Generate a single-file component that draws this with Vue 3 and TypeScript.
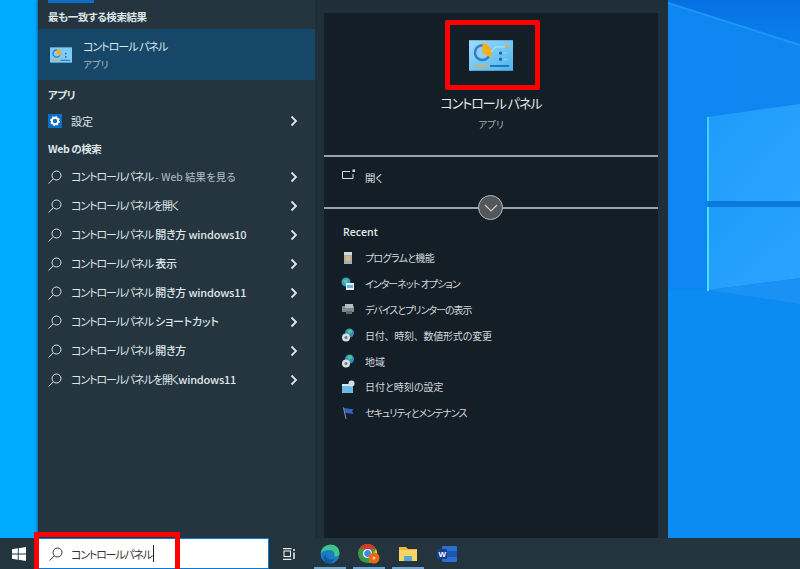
<script setup lang="ts">
const webRows: { main: string; extra?: string; dim?: boolean }[] = [
  { main: 'コントロールパネル', extra: ' - Web 結果を見る', dim: true },
  { main: 'コントロールパネルを開く' },
  { main: 'コントロールパネル', extra: ' 開き方 windows10' },
  { main: 'コントロールパネル', extra: ' 表示' },
  { main: 'コントロールパネル', extra: ' 開き方 windows11' },
  { main: 'コントロールパネル', extra: ' ショートカット' },
  { main: 'コントロールパネル', extra: ' 開き方' },
  { main: 'コントロールパネルを開く', extra: 'windows11' },
]
const recent: { label: string; kind: string; fit: string }[] = [
  { label: 'プログラムと機能', kind: 'box', fit: 'mid' },
  { label: 'インターネット オプション', kind: 'net', fit: 'kana' },
  { label: 'デバイスとプリンターの表示', kind: 'printer', fit: 'kana' },
  { label: '日付、時刻、数値形式の変更', kind: 'globe', fit: 'kanji' },
  { label: '地域', kind: 'globe', fit: 'none' },
  { label: '日付と時刻の設定', kind: 'clock', fit: 'none' },
  { label: 'セキュリティとメンテナンス', kind: 'flag', fit: 'kana' },
]
</script>

<template>
  <div class="screen">
    <svg class="wallpaper" viewBox="0 0 800 569" width="800" height="569">
      <defs>
        <linearGradient id="sky" x1="0" y1="0" x2="1" y2="0">
          <stop offset="0" stop-color="#0a8af5" />
          <stop offset="1" stop-color="#0f86f0" />
        </linearGradient>
        <linearGradient id="topsky" x1="0" y1="0" x2="0" y2="1">
          <stop offset="0" stop-color="#0670e2" />
          <stop offset="1" stop-color="#0a80ee" />
        </linearGradient>
        <linearGradient id="pane" x1="0" y1="0" x2="1" y2="1">
          <stop offset="0" stop-color="#1e9bfb" />
          <stop offset="1" stop-color="#2aa4fd" />
        </linearGradient>
        <linearGradient id="cpFill" x1="0" y1="0" x2="1" y2="1">
          <stop offset="0" stop-color="#9bdcfa" />
          <stop offset="1" stop-color="#4eb4ee" />
        </linearGradient>
      </defs>
      <rect width="800" height="569" fill="url(#sky)" />
      <rect x="0" y="0" width="38" height="569" fill="#00aaff" />
      <polygon points="668,2 800,45 800,0 668,0" fill="url(#topsky)" />
      <polygon points="668,2 800,44 800,46 668,4" fill="#1f95f8" />
      <polygon points="668,290 708,290 800,305 800,569 668,569" fill="#0b8cf3" />
      <polygon points="708,117 800,104 800,201 708,201" fill="url(#pane)" />
      <polygon points="708,207 800,207 800,278 708,290" fill="url(#pane)" />
      <polygon points="708,290 800,278 800,304" fill="#1a92f5" />
      <rect x="707" y="117" width="2" height="84" fill="#44d0fb" />
      <rect x="707" y="207" width="2" height="84" fill="#4ae0fb" />
      <rect x="708" y="201" width="92" height="6" fill="#0b78dc" />
    </svg>

    <div class="main">
      <div class="side"></div>
      <section class="results">
        <div class="accent"></div>
        <h3 class="head first">最も一致する検索結果</h3>
        <div class="best">
          <svg class="cp small" viewBox="0 0 46 32" width="22" height="16">
            <rect width="46" height="32" fill="#7ccdf6" />
            <circle cx="14" cy="13" r="9" fill="#2f7fc0" />
            <circle cx="14" cy="13" r="6" fill="#8fd0f2" />
            <path d="M14 13V3a10 10 0 0 1 8 15z" fill="#f4ae23" />
            <rect x="5" y="26" width="14" height="2" fill="#eea842" />
            <rect x="22" y="26" width="20" height="2" fill="#1b6ba8" />
            <circle cx="33" cy="13" r="1.800" fill="#1b6ba8" />
            <circle cx="33" cy="20" r="1.800" fill="#1b6ba8" />
          </svg>
          <div class="bestText">
            <div class="bestTitle">コントロール パネル</div>
            <div class="bestSub">アプリ</div>
          </div>
        </div>
        <h3 class="head apps">アプリ</h3>
        <div class="row settings">
          <svg class="rowIcon" viewBox="0 0 14 14" width="14" height="14">
            <rect width="14" height="14" fill="#0b6fc4" />
            <circle cx="7" cy="7" r="3.200" fill="none" stroke="#fff" stroke-width="2" />
            <circle cx="7" cy="7" r="4.400" fill="none" stroke="#fff" stroke-width="1.200" stroke-dasharray="1.600 1.850" />
          </svg>
          <span class="rowText">設定</span>
          <svg class="chev" viewBox="0 0 8 12" width="8" height="12"><path d="M1.500 1.500 6 6l-4.500 4.500" fill="none" stroke="#dfe6ea" stroke-width="1.800" /></svg>
        </div>
        <h3 class="head web">Web の検索</h3>
        <div v-for="(r, i) in webRows" :key="i" class="row">
          <svg class="rowIcon" viewBox="0 0 14 14" width="14" height="14">
            <circle cx="8.500" cy="5.500" r="4.500" fill="none" stroke="#dbe2e6" stroke-width="1" />
            <path d="M5.300 8.800.6 13.500" stroke="#dbe2e6" stroke-width="1" fill="none" />
          </svg>
          <span class="rowText"><span class="tight">{{ r.main }}</span><span :class="r.dim ? 'dim' : 'bold'">{{ r.extra }}</span></span>
          <svg class="chev" viewBox="0 0 8 12" width="8" height="12"><path d="M1.500 1.500 6 6l-4.500 4.500" fill="none" stroke="#dfe6ea" stroke-width="1.800" /></svg>
        </div>
      </section>

      <section class="detailWrap">
        <div class="detail">
          <div class="hero">
            <svg class="cp" viewBox="0 0 46 32" width="44" height="31">
              <rect width="46" height="32" fill="url(#cpFill)" />
              <circle cx="14" cy="13" r="9" fill="#2f7fc0" />
              <circle cx="14" cy="13" r="6.500" fill="#8fd0f2" />
              <path d="M14 13V3a10 10 0 0 1 8.500 15z" fill="#f4ae23" />
              <path d="M23 12c3 0 2-5 6-5h9" fill="none" stroke="#d4effc" stroke-width=".8" />
              <rect x="38" y="5" width="3" height="3" fill="#eea842" />
              <path d="M30 13.500h10M30 20h10" stroke="#a8dff8" stroke-width=".8" />
              <circle cx="33" cy="13.500" r="1.800" fill="#1b6ba8" />
              <circle cx="33" cy="20" r="1.800" fill="#1b6ba8" />
              <rect x="6" y="26" width="14" height="1.800" fill="#eea842" />
              <rect x="22" y="26" width="20" height="1.800" fill="#1b6ba8" />
            </svg>
            <div class="heroTitle">コントロール パネル</div>
            <div class="heroSub">アプリ</div>
          </div>
          <div class="rule"></div>
          <div class="open">
            <svg viewBox="0 0 14 12" width="14" height="12">
              <path d="M8 2.500H.5V9.500H11V5" fill="none" stroke="#d5dce0" stroke-width="1" />
              <rect x="10.500" y=".5" width="2.500" height="2.500" fill="#d5dce0" />
            </svg>
            <span>開く</span>
          </div>
          <div class="divider">
            <div class="rule"></div>
            <div class="circle">
              <svg viewBox="0 0 14 8" width="14" height="8"><path d="M1 1l6 6 6-6" fill="none" stroke="#c9ced1" stroke-width="1.200" /></svg>
            </div>
          </div>
          <h4 class="recentHead">Recent</h4>
          <ul class="recent">
            <li v-for="item in recent" :key="item.label">
              <svg viewBox="0 0 14 14" width="14" height="14">
                <template v-if="item.kind === 'box'">
                  <rect x="3" y="1" width="8" height="12" fill="#a8aeab" />
                  <rect x="5" y="5" width="4" height="5" fill="#d9b884" />
                  <rect x="3" y="1" width="8" height="3" fill="#d7dbd8" />
                </template>
                <template v-else-if="item.kind === 'net'">
                  <circle cx="5" cy="5" r="4.500" fill="#2f9fd8" />
                  <path d="M2 3.500 6 2l1 3-3 2z" fill="#6fc07a" />
                  <rect x="5" y="6" width="8" height="7" fill="#e5eef3" />
                  <rect x="6" y="8" width="6" height="3" fill="#6db4dc" />
                </template>
                <template v-else-if="item.kind === 'printer'">
                  <rect x="1" y="4" width="12" height="6" fill="#7e8a90" />
                  <rect x="4" y="2" width="8" height="4" fill="#b6bdc1" />
                  <rect x="5" y="9" width="6" height="3" fill="#5e6a70" />
                </template>
                <template v-else-if="item.kind === 'globe'">
                  <circle cx="8.500" cy="5" r="4.500" fill="#2a8fd6" />
                  <path d="M6 2.500 10 1l1.500 3L8 6z" fill="#5cc46d" />
                  <circle cx="5" cy="9.500" r="4" fill="#d8dde0" />
                  <circle cx="5" cy="9.500" r="1.500" fill="#6f7a80" />
                </template>
                <template v-else-if="item.kind === 'clock'">
                  <rect x="1" y="4" width="11" height="9" fill="#6cbbe6" />
                  <rect x="1" y="4" width="11" height="2" fill="#d5e8f2" />
                  <circle cx="10.500" cy="3.500" r="3" fill="#d8dde0" />
                </template>
                <template v-else>
                  <path d="M3 2 13 3.500 11 5 12.500 8 4.500 7z" fill="#3560c8" />
                  <path d="M2.500 1.500 5 13" stroke="#8a97ad" stroke-width="1" />
                </template>
              </svg>
              <span :class="item.fit">{{ item.label }}</span>
            </li>
          </ul>
        </div>
      </section>
      <div class="gutter"></div>
    </div>

    <footer class="taskbar">
      <div class="startBtn">
        <svg viewBox="0 0 14 14" width="14" height="14">
          <path d="M0 2.200 5.800 1.300V6.600H0zM6.700 1.200 14 0V6.600H6.700zM0 7.400H5.800V12.700L0 11.800zM6.700 7.400H14V14L6.700 12.800z" fill="#fff" />
        </svg>
      </div>
      <div class="search">
        <svg class="searchIcon" viewBox="0 0 14 14" width="14" height="14">
          <circle cx="8.500" cy="5.500" r="4.500" fill="none" stroke="#333" stroke-width="1" />
          <path d="M5.300 8.800.6 13.500" stroke="#333" stroke-width="1" fill="none" />
        </svg>
        <span class="query">コントロールパネル</span><span class="caret"></span>
      </div>
      <div class="tray">
        <div class="tb">
          <svg viewBox="0 0 14 12" width="14" height="12">
            <rect x="2" y="3" width="6.500" height="5.500" fill="none" stroke="#e6eaec" stroke-width="1.100" />
            <path d="M1 .6H9.500M1 11.400H9.500" stroke="#e6eaec" stroke-width="1.100" />
            <path d="M12 1V3M12 4.500V11" stroke="#e6eaec" stroke-width="1.600" />
          </svg>
        </div>
        <div class="tb app">
          <svg viewBox="0 0 20 20" width="20" height="20">
            <circle cx="10" cy="10" r="9.500" fill="#1b7cc4" />
            <path d="M.6 9C2 2.500 8 .5 12 .8c4 .4 7.500 3.700 7.500 8.700 0 2.500-3 3.300-5.500 2.800 1.500-3.500-1-6.300-4-6.300-4 0-7.500 1-9.400 3z" fill="#3fc48a" />
            <path d="M5.500 10c0 4.500 4.500 6.500 9 5-1.500 2.500-3.500 4-6 4C4 19 2 14 5.500 10z" fill="#0f5aa8" />
          </svg>
        </div>
        <div class="tb app">
          <svg viewBox="0 0 22 20" width="22" height="20">
            <circle cx="9.500" cy="9.500" r="9.500" fill="#3a9a4b" />
            <path d="M1.300 5A9.500 9.500 0 0 1 18 5H9.500z" fill="#d8392b" />
            <path d="M18 5a9.500 9.500 0 0 1-7 14l4-9z" fill="#f5c518" />
            <circle cx="9.500" cy="9.500" r="4" fill="#3f86e8" stroke="#fff" stroke-width="1.200" />
            <circle cx="16" cy="14" r="5.500" fill="#e56a12" />
            <circle cx="16" cy="14" r="1.500" fill="#f7c9a0" />
          </svg>
        </div>
        <div class="tb app">
          <svg viewBox="0 0 18 16" width="18" height="16">
            <path d="M0 1H7L9 3H18V15H0z" fill="#eab93b" />
            <rect y="4" width="18" height="11" fill="#f6d465" />
            <rect x="5" y="10" width="8" height="5" fill="#5fa5d6" />
          </svg>
        </div>
        <div class="tb app">
          <svg viewBox="0 0 20 16" width="20" height="16">
            <rect x="5" y="0" width="15" height="16" rx="1" fill="#2b6fcf" />
            <rect x="5" y="5" width="15" height="6" fill="#1e55ad" />
            <rect x="0" y="3" width="10" height="10" rx="1" fill="#14408f" />
            <text x="1.600" y="11" class="wordW">W</text>
          </svg>
        </div>
      </div>
    </footer>

    <div class="mark markIcon"></div>
    <div class="mark markSearch"></div>
  </div>
</template>

<style scoped>
.screen {
  position: relative;
  width: 800px;
  height: 569px;
  overflow: hidden;
  display: flex;
  flex-direction: column;
  font-family: "Noto Sans CJK JP", "Noto Sans", sans-serif;
  font-feature-settings: "palt";
  color: #e4e9ec;
}
.wallpaper {
  position: absolute;
  left: 0;
  top: 0;
}
.main {
  position: relative;
  flex: 1;
  display: flex;
  min-height: 0;
}
.side {
  width: 38px;
  flex: none;
}
.gutter {
  flex: 1;
}
.results {
  width: 277px;
  flex: none;
  background: #24353f;
  position: relative;
  box-shadow: -1px 0 2px rgba(0, 40, 90, .5);
}
.accent {
  width: 46px;
  height: 3px;
  margin-left: 10px;
  background: #0a6fc6;
}
.head {
  margin: 0;
  padding-left: 10px;
  font-size: 10.500px;
  font-weight: 700;
  line-height: 14px;
  letter-spacing: -.4px;
  color: #dfe5e8;
}
.first {
  margin-top: 7px;
  height: 19px;
}
.best {
  height: 51px;
  background: #164769;
  display: flex;
  align-items: center;
  padding-left: 12px;
  gap: 11px;
}
.small {
  flex: none;
}
.bestText {
  display: flex;
  flex-direction: column;
  gap: 4px;
}
.bestTitle {
  font-size: 11px;
  line-height: 15px;
  letter-spacing: -1px;
  color: #dfe6ea;
}
.bestSub {
  font-size: 9.500px;
  line-height: 13px;
  color: #a9bac6;
}
.apps {
  margin-top: 8px;
  height: 14px;
}
.row {
  height: 29px;
  display: flex;
  align-items: center;
  padding-left: 10px;
  position: relative;
}
.settings {
  height: 32px;
  margin-top: 3px;
}
.web {
  margin-top: 5px;
  margin-bottom: 6px;
  height: 14px;
}
.rowIcon {
  flex: none;
}
.rowText {
  margin-left: 9px;
  font-size: 11px;
  line-height: 15px;
  color: #dfe5e8;
  white-space: pre;
}
.tight {
  letter-spacing: -1.100px;
}
.dim {
  color: #b4c0c7;
  font-size: 10.500px;
}
.bold {
  font-weight: 500;
  letter-spacing: -.2px;
}
.chev {
  position: absolute;
  left: 252px;
  top: 50%;
  margin-top: -6px;
}
.detailWrap {
  width: 353px;
  flex: none;
  background: #1f2f39;
  padding: 13px 10px 0 9px;
  box-sizing: border-box;
}
.detail {
  height: 100%;
  background: #141e26;
  display: flex;
  flex-direction: column;
}
.hero {
  height: 142px;
  display: flex;
  flex-direction: column;
  align-items: center;
  flex: none;
}
.cp {
  margin-top: 27px;
  margin-bottom: 0;
}
.small.cp {
  margin: 0;
}
.heroTitle {
  margin-top: 22px;
  font-size: 13px;
  line-height: 20px;
  letter-spacing: -1px;
  color: #e3e8eb;
}
.heroSub {
  margin-top: 4px;
  font-size: 9.500px;
  line-height: 14px;
  color: #a7b0b6;
}
.rule {
  height: 2px;
  background: #9aa3a8;
  flex: none;
}
.open {
  height: 40px;
  margin-bottom: 10px;
  display: flex;
  align-items: center;
  padding-left: 18px;
  gap: 9px;
  flex: none;
  font-size: 10.500px;
  color: #d5dce0;
}
.open svg {
  margin-top: -4px;
}
.divider {
  position: relative;
  flex: none;
}
.circle {
  position: absolute;
  left: 154px;
  top: -12px;
  width: 25px;
  height: 25px;
  box-sizing: border-box;
  border: 1px solid #b5babd;
  border-radius: 50%;
  background: #545759;
  display: flex;
  align-items: center;
  justify-content: center;
}
.recentHead {
  margin: 16px 0 0 19px;
  font-family: "Open Sans", "Noto Sans", sans-serif;
  font-size: 10.500px;
  font-weight: 600;
  line-height: 14px;
  color: #e3e8eb;
}
.recent {
  list-style: none;
  margin: 6px 0 0 17px;
  padding: 0;
}
.recent li {
  height: 25.800px;
  display: flex;
  align-items: center;
  gap: 10px;
  font-size: 10px;
  color: #d3d9dd;
}
.mid {
  letter-spacing: -.7px;
}
.kana {
  letter-spacing: -1px;
}
.kanji {
  font-feature-settings: normal;
  letter-spacing: -.25px;
}
.taskbar {
  position: relative;
  height: 31px;
  flex: none;
  display: flex;
  background: #23343e;
}
.startBtn {
  width: 38px;
  flex: none;
  display: flex;
  align-items: center;
  justify-content: center;
}
.search {
  width: 231px;
  flex: none;
  box-sizing: border-box;
  background: #fff;
  border: 1px solid #0a78d4;
  display: flex;
  align-items: center;
  padding-left: 10px;
  color: #222;
}
.searchIcon {
  flex: none;
}
.query {
  margin-left: 8px;
  font-size: 11px;
  letter-spacing: -1.200px;
  color: #333;
}
.caret {
  width: 1px;
  height: 17px;
  background: #222;
  margin-left: 1px;
}
.tray {
  display: flex;
  padding-left: 5px;
}
.tb {
  width: 30px;
  display: flex;
  align-items: center;
  justify-content: center;
}
.tb + .tb {
  margin-left: 6px;
}
.tb + .tb + .tb {
  margin-left: 0;
}
.app {
  width: 39px;
  box-sizing: border-box;
  position: relative;
}
.app::after {
  content: "";
  position: absolute;
  left: 3.500px;
  right: 3.500px;
  bottom: 0;
  height: 2px;
  background: #6ea8cf;
}
.tb.app:last-child::after {
  display: none;
}
.wordW {
  font-family: "Liberation Sans", sans-serif;
  font-size: 8px;
  font-weight: 700;
  fill: #fff;
}
.mark {
  position: absolute;
  box-sizing: border-box;
  border: 5px solid #f00;
}
.markIcon {
  left: 445px;
  top: 20px;
  width: 95px;
  height: 70px;
  border-radius: 2px;
}
.markSearch {
  left: 34px;
  top: 532px;
  width: 146px;
  height: 37px;
  border-bottom: none;
}
</style>
